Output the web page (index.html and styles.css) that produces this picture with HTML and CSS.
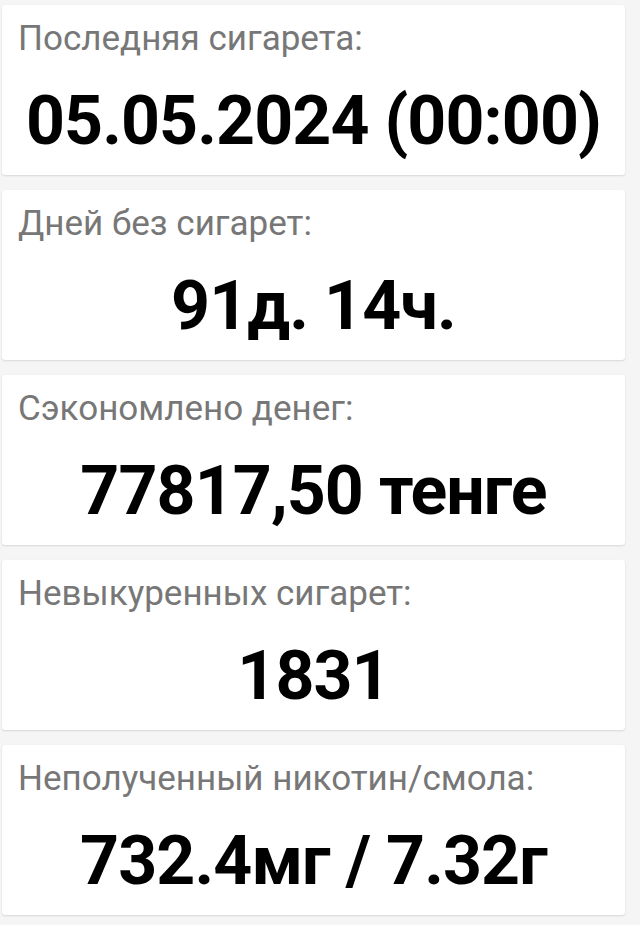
FILE: index.html
```html
<!DOCTYPE html>
<html lang="ru">
<head>
<meta charset="utf-8">
<title>Статистика</title>
<link rel="stylesheet" href="styles.css">
</head>
<body>
<main class="stats">
  <section class="card">
    <div class="label">Последняя сигарета:</div>
    <div class="value">05.05.2024 (00:00)</div>
  </section>
  <section class="card">
    <div class="label">Дней без сигарет:</div>
    <div class="value">91д. 14ч.</div>
  </section>
  <section class="card">
    <div class="label">Сэкономлено денег:</div>
    <div class="value">77817,50 тенге</div>
  </section>
  <section class="card">
    <div class="label">Невыкуренных сигарет:</div>
    <div class="value">1831</div>
  </section>
  <section class="card">
    <div class="label">Неполученный никотин/смола:</div>
    <div class="value">732.4мг / 7.32г</div>
  </section>
</main>
</body>
</html>
```
FILE: styles.css
```css
html, body {
  margin: 0;
  padding: 0;
  background: #f5f5f5;
}

body {
  font-family: Roboto, "Noto Sans", sans-serif;
  width: 640px;
  height: 925px;
  overflow: hidden;
}

.stats {
  display: flex;
  flex-direction: column;
  gap: 15px;
  padding: 5px 15px 0 2px;
}

.card {
  background: #ffffff;
  border-radius: 3px;
  box-shadow: 0 1px 2px rgba(0, 0, 0, 0.12), 0 0 1px rgba(0, 0, 0, 0.06);
  height: 170px;
  box-sizing: border-box;
  padding: 14px 0 0 0;
}

.label {
  color: #777777;
  font-size: 35px;
  line-height: 40px;
  padding: 0 16px;
}

.value {
  color: #000000;
  font-weight: 700;
  font-size: 68px;
  line-height: 80px;
  letter-spacing: -0.9px;
  text-align: center;
  white-space: nowrap;
  margin-top: 22px;
}
```
